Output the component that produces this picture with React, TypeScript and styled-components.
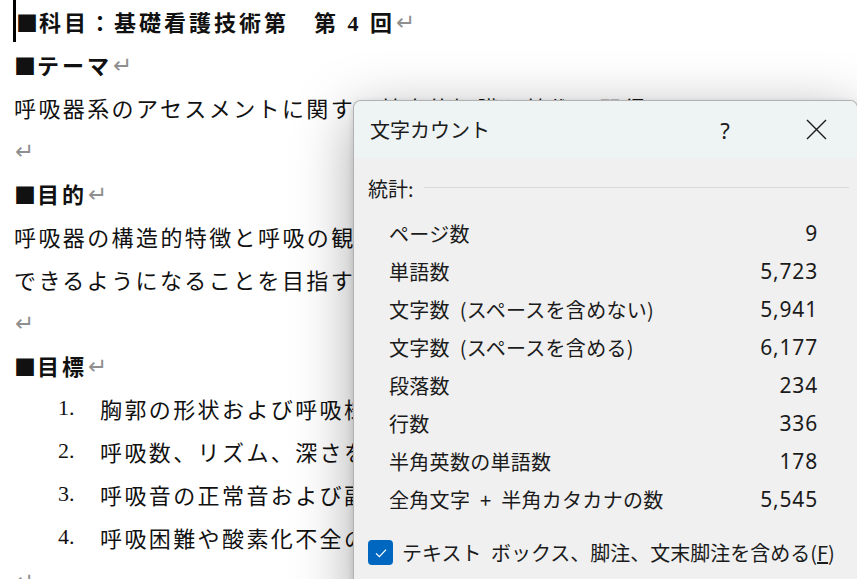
import React from 'react';
import styled, { createGlobalStyle } from 'styled-components';

const GlobalStyle = createGlobalStyle`
  html, body {
    margin: 0;
    padding: 0;
    background: #ffffff;
  }
  body {
    overflow: hidden;
  }
  * {
    box-sizing: border-box;
  }
`;

const Page = styled.div`
  position: relative;
  width: 857px;
  height: 579px;
  overflow: hidden;
  background: #ffffff;
`;

/* ---------- document behind the dialog ---------- */

const Doc = styled.div`
  display: flex;
  flex-direction: column;
  margin-top: -1px;
  padding-left: 14px;
  font-family: 'Liberation Serif', 'Noto Sans CJK JP', serif;
  font-size: 22px;
  color: #111111;
  white-space: nowrap;
`;

const Line = styled.div<{ $bold?: boolean }>`
  display: flex;
  align-items: center;
  height: 43px;
  font-weight: ${p => (p.$bold ? 700 : 400)};
  letter-spacing: ${p => (p.$bold ? 3 : 2.4)}px;
`;

const ListLine = styled(Line)`
  padding-left: 44px;
`;

const Num = styled.span`
  width: 42px;
  letter-spacing: 0;
`;

const Square = styled.span`
  font-family: 'Noto Sans CJK JP', sans-serif;
  letter-spacing: 0;
  margin-right: 1px;
`;

const Caret = styled.span`
  width: 3px;
  height: 42px;
  margin-left: -1px;
  background: #000000;
`;

const Mark = styled.span`
  margin-left: 1px;
  margin-top: 3px;
  font-family: 'DejaVu Sans', sans-serif;
  font-size: 23px;
  font-weight: 400;
  letter-spacing: 0;
  color: #8f8f8f;
`;

/* ---------- word count dialog ---------- */

const Dialog = styled.div`
  position: absolute;
  left: 353px;
  top: 100px;
  width: 505px;
  height: 520px;
  display: flex;
  flex-direction: column;
  border: 1px solid rgba(0, 0, 0, 0.26);
  border-radius: 8px 8px 0 0;
  background: #f0f0f0;
  box-shadow: 0 14px 58px rgba(0, 0, 0, 0.34), 0 2px 6px rgba(0, 0, 0, 0.14);
  font-family: 'Noto Sans CJK JP', 'Noto Sans', sans-serif;
  word-spacing: 5px;
  color: #1b1b1b;
  overflow: hidden;
`;

const TitleBar = styled.div`
  display: flex;
  align-items: center;
  height: 57px;
  padding: 0 12px 0 16px;
  background: #eef3f3;
`;

const Title = styled.div`
  flex: 1;
  font-size: 20px;
`;

const TitleButton = styled.div`
  display: flex;
  align-items: center;
  justify-content: center;
  width: 58px;
  height: 40px;
  font-family: 'Noto Sans', sans-serif;
  font-size: 22px;
  color: #1b1b1b;
`;

const TitleButtons = styled.div`
  display: flex;
  gap: 33px;
`;

const Body = styled.div`
  display: flex;
  flex-direction: column;
  padding: 16px 8px 0 14px;
`;

const Section = styled.div`
  display: flex;
  align-items: center;
  height: 28px;
  font-size: 20px;
`;

const Rule = styled.div`
  flex: 1;
  height: 1px;
  margin-left: 10px;
  margin-top: -2px;
  background: #d9d9d9;
`;

const Stats = styled.div`
  display: grid;
  grid-template-columns: 1fr auto;
  grid-auto-rows: 38px;
  align-items: center;
  margin-top: 12px;
  padding: 0 31px 0 21px;
  font-size: 20px;
`;

const Label = styled.span`
  letter-spacing: 0.3px;
`;

const Value = styled.span`
  text-align: right;
  font-family: 'Noto Sans', sans-serif;
  font-size: 21px;
  letter-spacing: 0.8px;
`;

const CheckRow = styled.label`
  display: flex;
  align-items: center;
  gap: 9px;
  margin-top: 20px;
  font-size: 20px;
  white-space: nowrap;
`;

const Box = styled.span`
  display: flex;
  align-items: center;
  justify-content: center;
  width: 25px;
  height: 25px;
  border-radius: 4px;
  background: #0067c0;
`;

const stats: [string, string][] = [
  ['ページ数', '9'],
  ['単語数', '5,723'],
  ['文字数 (スペースを含めない)', '5,941'],
  ['文字数 (スペースを含める)', '6,177'],
  ['段落数', '234'],
  ['行数', '336'],
  ['半角英数の単語数', '178'],
  ['全角文字 + 半角カタカナの数', '5,545'],
];

const goals = [
  '胸郭の形状および呼吸様式を観察できる。',
  '呼吸数、リズム、深さを正確に測定できる。',
  '呼吸音の正常音および副雑音を聴診できる。',
  '呼吸困難や酸素化不全の徴候を判断できる。',
];

const App: React.FC = () => {
  return (
    <Page>
      <GlobalStyle />
      <Doc>
        <Line $bold>
          <Caret />
          <Square>■</Square>科目：基礎看護技術第　第 4 回<Mark>↵</Mark>
        </Line>
        <Line $bold>
          <Square>■</Square>テーマ<Mark>↵</Mark>
        </Line>
        <Line>呼吸器系のアセスメントに関する基本的知識と技術の習得</Line>
        <Line>
          <Mark>↵</Mark>
        </Line>
        <Line $bold>
          <Square>■</Square>目的<Mark>↵</Mark>
        </Line>
        <Line>呼吸器の構造的特徴と呼吸の観察方法を理解し、正確なアセスメントが</Line>
        <Line>できるようになることを目指す。</Line>
        <Line>
          <Mark>↵</Mark>
        </Line>
        <Line $bold>
          <Square>■</Square>目標<Mark>↵</Mark>
        </Line>
        {goals.map((g, i) => (
          <ListLine key={i}>
            <Num>{i + 1}.</Num>
            {g}
          </ListLine>
        ))}
        <Line>
          <Mark>↵</Mark>
        </Line>
      </Doc>

      <Dialog>
        <TitleBar>
          <Title>文字カウント</Title>
          <TitleButtons>
            <TitleButton>?</TitleButton>
            <TitleButton>
              <svg width="21" height="21" viewBox="0 0 21 21">
                <path d="M1 1 L20 20 M20 1 L1 20" stroke="#1b1b1b" strokeWidth="1.4" fill="none" />
              </svg>
            </TitleButton>
          </TitleButtons>
        </TitleBar>
        <Body>
          <Section>
            統計:
            <Rule />
          </Section>
          <Stats>
            {stats.map(([label, value]) => (
              <React.Fragment key={label}>
                <Label>{label}</Label>
                <Value>{value}</Value>
              </React.Fragment>
            ))}
          </Stats>
          <CheckRow>
            <Box>
              <svg width="14" height="14" viewBox="0 0 14 14">
                <path d="M2 7.4 L5.4 10.6 L12 3.6" stroke="#ffffff" strokeWidth="1.3" fill="none" />
              </svg>
            </Box>
            <span>
              テキスト ボックス、脚注、文末脚注を含める(<u>F</u>)
            </span>
          </CheckRow>
        </Body>
      </Dialog>
    </Page>
  );
};

export default App;
